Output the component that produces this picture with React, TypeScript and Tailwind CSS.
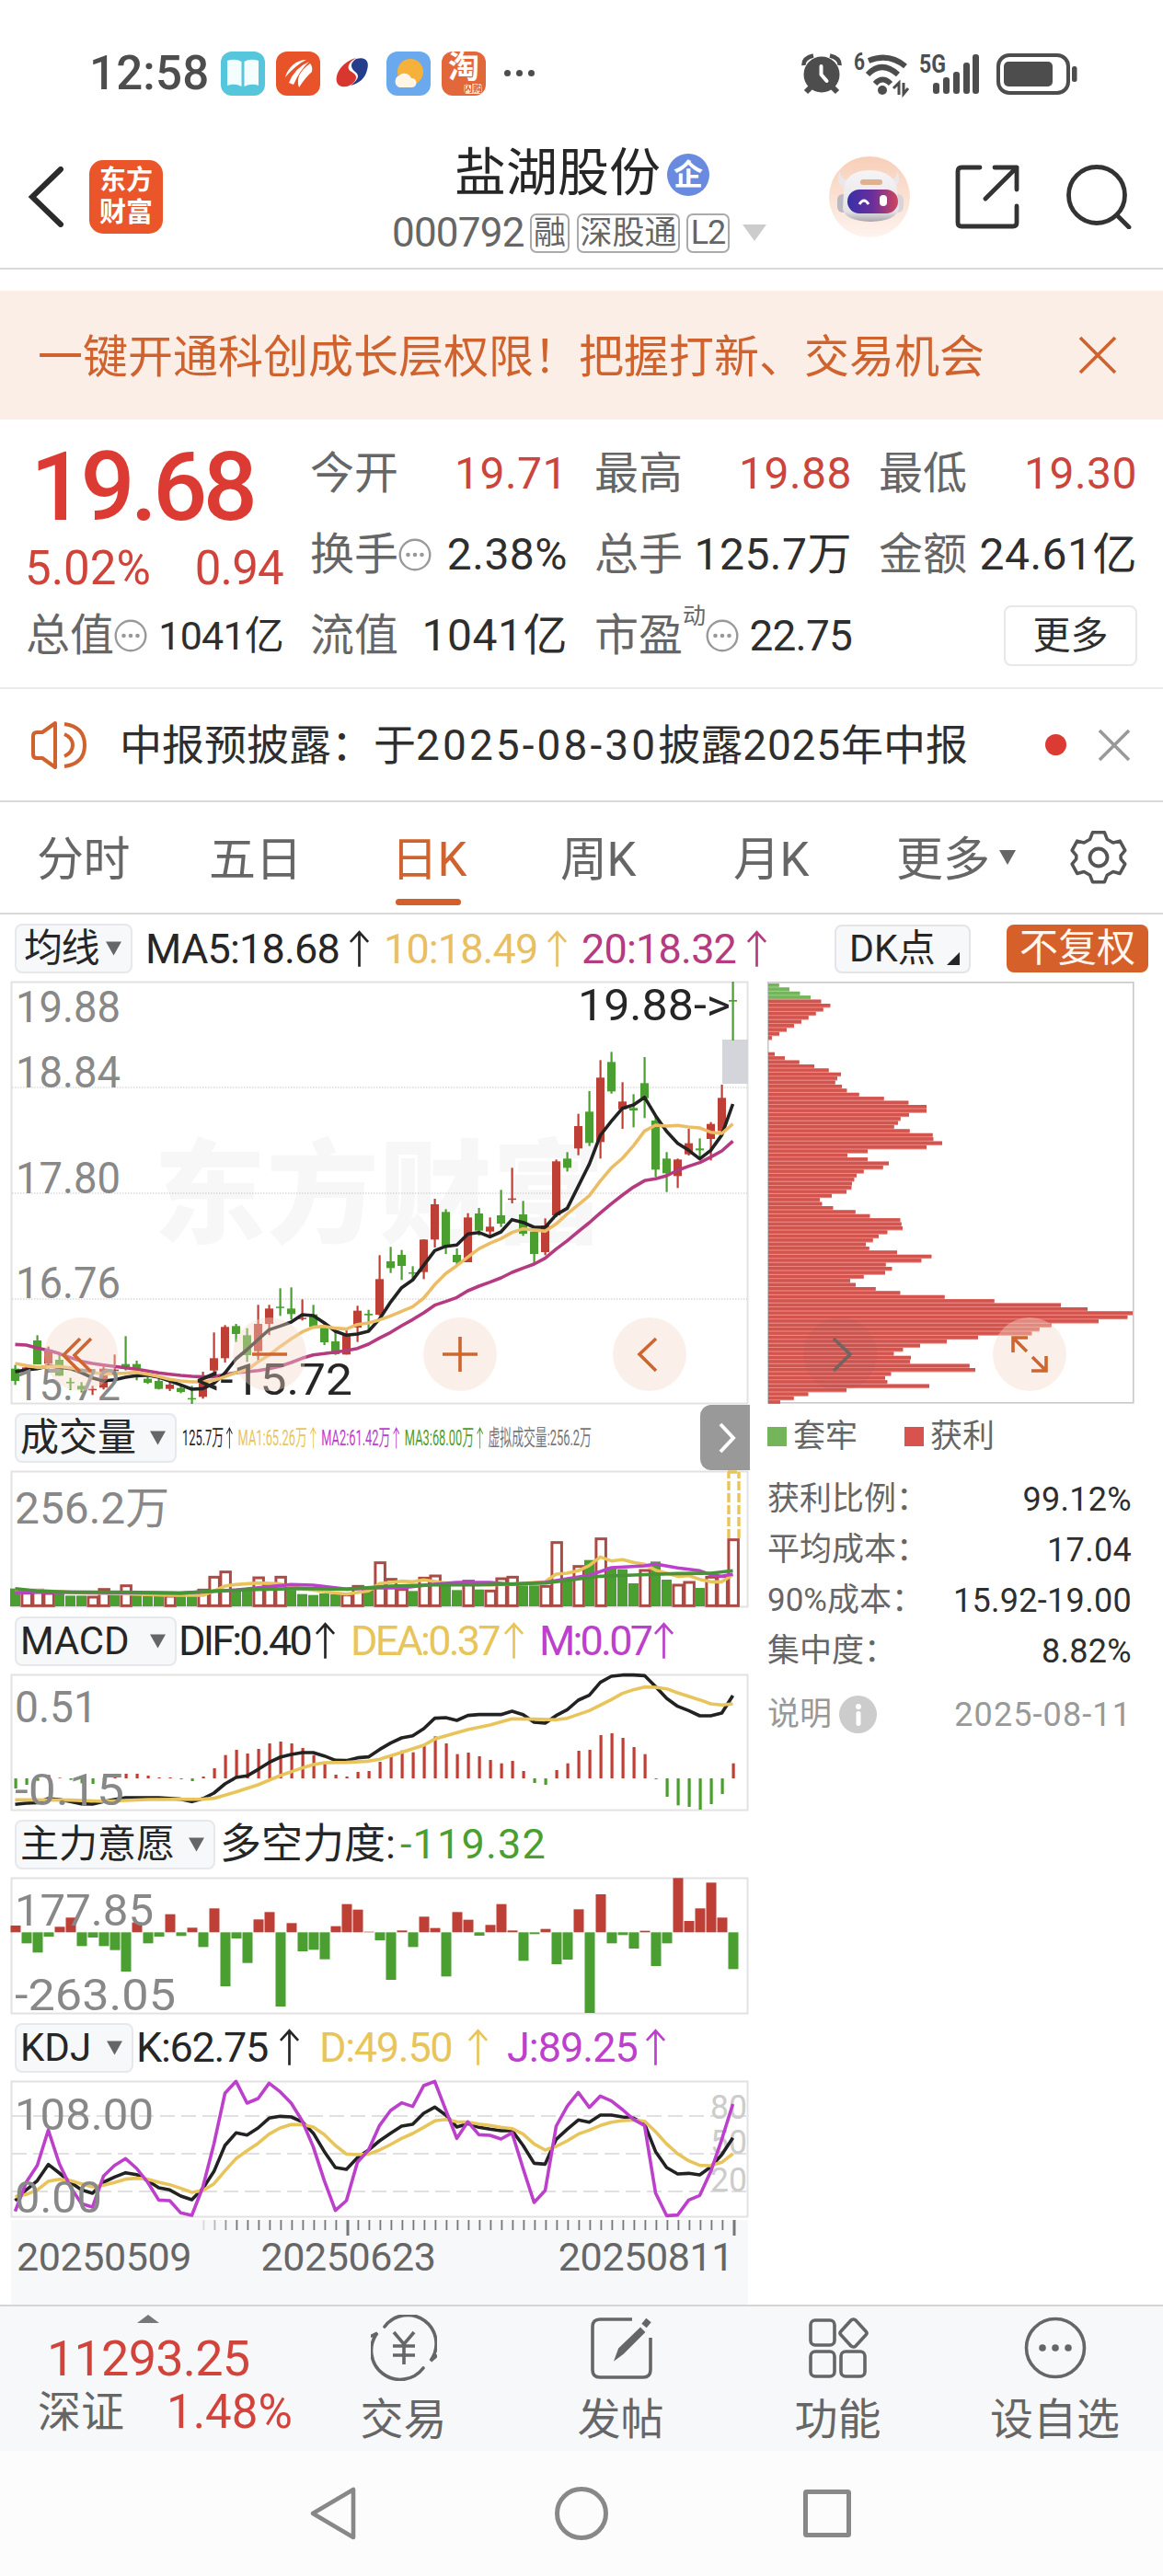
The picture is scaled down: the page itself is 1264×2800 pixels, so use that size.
import { ReactNode } from "react";
import { clsx } from "clsx";

type Point = [number, number];

const RED = "#bd3f36";
const GREEN = "#4b9e30";
const GOLD = "#e8c55a";
const PURPLE = "#bc40cb";

// [high, bodyTop, bodyBottom, low, up]
const candles: number[][] = [
  [1300, 1312, 1352, 1365, 0], [1300, 1308, 1326, 1326, 1], [1203, 1220, 1298, 1298, 0], [1240, 1255, 1296, 1312, 1],
  [1268, 1283, 1335, 1335, 0], [1342, 1355, 1359, 1382, 0], [1356, 1368, 1380, 1390, 0], [1368, 1378, 1382, 1398, 1],
  [1305, 1312, 1374, 1380, 1], [1266, 1315, 1320, 1330, 1], [1206, 1297, 1310, 1318, 0], [1286, 1297, 1312, 1350, 0],
  [1338, 1345, 1358, 1362, 0], [1345, 1352, 1378, 1380, 0], [1356, 1364, 1378, 1385, 1], [1368, 1375, 1388, 1392, 0],
  [1368, 1408, 1412, 1427, 0], [1322, 1352, 1404, 1410, 1], [1194, 1278, 1318, 1328, 1], [1170, 1176, 1278, 1292, 1],
  [1166, 1173, 1199, 1225, 0], [1180, 1203, 1268, 1290, 0], [1104, 1166, 1255, 1285, 1], [1104, 1116, 1166, 1202, 1],
  [1050, 1110, 1114, 1140, 0], [1047, 1116, 1134, 1152, 0], [1086, 1146, 1150, 1155, 1], [1104, 1135, 1176, 1180, 0],
  [1165, 1176, 1226, 1235, 0], [1180, 1223, 1265, 1267, 0], [1185, 1200, 1266, 1266, 1], [1107, 1123, 1178, 1225, 1],
  [1120, 1133, 1138, 1185, 0], [942, 1020, 1136, 1140, 1], [915, 962, 984, 1000, 0], [925, 941, 977, 1023, 0],
  [978, 998, 1002, 1020, 0], [890, 891, 997, 1020, 1], [758, 776, 891, 917, 1], [792, 801, 912, 938, 0],
  [920, 941, 965, 975, 0], [805, 819, 965, 965, 1], [788, 806, 862, 878, 0], [819, 849, 865, 880, 1],
  [729, 812, 839, 850, 0], [657, 757, 761, 773, 1], [765, 809, 872, 879, 0], [860, 865, 938, 968, 0],
  [822, 845, 932, 942, 1], [630, 636, 812, 818, 1], [606, 627, 657, 669, 0], [481, 521, 594, 616, 1],
  [407, 474, 576, 586, 0], [306, 363, 573, 627, 1], [279, 312, 408, 415, 0], [378, 441, 466, 530, 1],
  [417, 462, 470, 525, 0], [296, 381, 430, 495, 0], [490, 503, 663, 687, 0], [606, 627, 675, 736, 0],
  [627, 630, 684, 723, 1], [530, 577, 613, 617, 1], [561, 594, 600, 625, 0], [508, 514, 563, 633, 1],
  [386, 429, 537, 545, 1], [50, 110, 115, 242, 0],
];

const ma5 = [1322, 1316, 1312, 1303, 1308, 1312, 1325, 1342, 1352, 1348, 1340, 1335, 1333, 1340, 1352, 1365, 1379, 1377, 1360, 1326, 1280, 1250, 1217, 1185, 1173, 1160, 1136, 1139, 1163, 1190, 1203, 1199, 1190, 1150, 1095, 1048, 1023, 975, 927, 913, 909, 873, 868, 882, 866, 826, 835, 851, 851, 810, 789, 717, 645, 551, 505, 463, 452, 427, 487, 538, 577, 600, 628, 600, 550, 449];
const ma10 = [1295, 1302, 1308, 1306, 1305, 1309, 1315, 1325, 1329, 1328, 1327, 1324, 1330, 1338, 1347, 1352, 1355, 1355, 1350, 1338, 1325, 1316, 1290, 1268, 1240, 1215, 1192, 1177, 1174, 1180, 1183, 1168, 1163, 1153, 1140, 1125, 1110, 1082, 1038, 1002, 976, 948, 921, 903, 888, 868, 856, 860, 864, 840, 807, 778, 748, 700, 657, 626, 585, 537, 518, 521, 519, 524, 527, 541, 545, 514];
const ma20 = [1233, 1235, 1245, 1252, 1263, 1276, 1288, 1295, 1300, 1305, 1309, 1314, 1320, 1326, 1330, 1334, 1337, 1339, 1338, 1332, 1325, 1322, 1318, 1312, 1304, 1292, 1278, 1267, 1263, 1258, 1253, 1246, 1232, 1212, 1194, 1172, 1152, 1130, 1105, 1093, 1080, 1058, 1043, 1030, 1016, 998, 984, 971, 952, 922, 895, 865, 836, 804, 774, 746, 720, 699, 693, 683, 665, 652, 640, 622, 602, 570];

const volumes = [620, 632, 622, 633, 633, 643, 643, 645, 620, 638, 608, 638, 644, 644, 642, 645, 645, 622, 580, 563, 625, 625, 582, 605, 580, 625, 638, 641, 636, 638, 638, 610, 625, 533, 587, 620, 628, 583, 576, 612, 625, 593, 623, 625, 585, 580, 610, 610, 610, 467, 595, 545, 527, 455, 550, 557, 603, 558, 532, 591, 606, 597, 618, 580, 578, 458];
const volumeUp = new Set([1, 2, 3, 7, 8, 10, 14, 17, 18, 19, 22, 23, 24, 30, 31, 33, 34, 35, 37, 38, 41, 43, 44, 45, 48, 49, 51, 53, 57, 60, 61, 63, 64, 65]);
const volMa1: Point[] = [[0, 625], [3, 628], [6, 634], [10, 637], [14, 642], [17, 642], [18, 628], [19, 612], [20, 607], [22, 602], [24, 605], [26, 620], [28, 630], [30, 638], [32, 628], [33, 604], [35, 596], [36, 598], [37, 592], [39, 602], [41, 603], [43, 608], [45, 606], [47, 600], [48, 598], [49, 573], [50, 570], [51, 562], [52, 545], [53, 517], [54, 530], [55, 526], [56, 535], [57, 541], [58, 560], [59, 570], [60, 580], [61, 578], [62, 590], [63, 598], [64, 598], [65, 575]];
const volMa2: Point[] = [[0, 633], [5, 632], [15, 635], [20, 625], [22, 617], [25, 607], [27, 609], [30, 622], [33, 617], [35, 618], [38, 606], [40, 600], [43, 600], [45, 606], [48, 600], [50, 588], [52, 577], [54, 552], [57, 546], [58, 540], [60, 553], [62, 562], [63, 575], [64, 580], [65, 573]];
const volMa3: Point[] = [[0, 620], [2, 628], [5, 632], [10, 632], [15, 635], [18, 628], [22, 623], [26, 620], [30, 622], [34, 612], [38, 608], [42, 608], [46, 604], [48, 602], [50, 593], [53, 580], [56, 576], [60, 571], [63, 570], [65, 562]];

const macdBars = [432, 420, 407, 388, 397, 404, 415, 417, 402, 392, 384, 384, 390, 396, 396, 402, 408, 393, 366, 323, 306, 318, 303, 285, 279, 285, 300, 323, 352, 387, 393, 378, 375, 345, 322, 308, 314, 293, 262, 285, 320, 315, 327, 339, 350, 342, 375, 414, 420, 372, 350, 309, 306, 258, 252, 267, 297, 320, 402, 459, 487, 492, 501, 483, 450, 350];
const dif: Point[] = [[0, 484], [1, 480], [2, 478], [3, 465], [4, 468], [5, 475], [6, 482], [7, 483], [8, 475], [9, 468], [10, 462], [13, 462], [15, 467], [16, 475], [17, 465], [18, 447], [19, 417], [20, 396], [21, 391], [22, 370], [23, 347], [24, 330], [25, 321], [26, 315], [27, 315], [28, 326], [29, 340], [30, 341], [31, 332], [32, 329], [33, 305], [34, 284], [35, 267], [36, 260], [37, 237], [38, 203], [39, 201], [40, 210], [41, 194], [42, 191], [44, 191], [45, 180], [46, 191], [47, 216], [48, 219], [49, 194], [50, 175], [51, 144], [52, 128], [53, 86], [54, 66], [55, 62], [56, 62], [57, 64], [58, 100], [59, 138], [60, 164], [61, 178], [62, 195], [63, 195], [64, 186], [65, 129]];
const dea: Point[] = [[0, 469], [5, 470], [8, 474], [12, 468], [17, 467], [18, 464], [20, 443], [22, 420], [24, 390], [26, 365], [27, 354], [28, 348], [30, 347], [32, 343], [33, 337], [35, 314], [37, 291], [38, 271], [39, 260], [41, 240], [43, 225], [45, 205], [47, 206], [49, 208], [50, 203], [52, 178], [54, 142], [55, 122], [56, 110], [57, 101], [58, 102], [59, 107], [60, 120], [62, 143], [63, 156], [64, 160], [65, 156]];

const force = [878, 936, 966, 914, 882, 852, 945, 917, 945, 958, 1028, 868, 936, 914, 841, 912, 885, 948, 822, 1076, 920, 1000, 858, 834, 1142, 870, 962, 957, 988, 880, 808, 826, 898, 926, 1055, 894, 948, 849, 886, 1044, 834, 859, 911, 876, 808, 894, 993, 906, 889, 1004, 989, 825, 1163, 776, 936, 909, 953, 895, 1010, 936, 723, 863, 822, 738, 852, 1020];

const kdjJ = [640, 545, 490, 375, 485, 560, 615, 626, 525, 490, 468, 500, 545, 603, 605, 645, 653, 560, 420, 255, 216, 287, 272, 222, 250, 287, 345, 430, 540, 637, 605, 480, 440, 360, 311, 286, 298, 230, 216, 310, 402, 348, 390, 392, 404, 384, 500, 611, 572, 362, 297, 252, 301, 264, 280, 308, 340, 360, 580, 654, 652, 603, 588, 510, 405, 290];
const kdjK = [605, 570, 540, 487, 515, 545, 570, 581, 545, 528, 514, 520, 540, 563, 570, 590, 602, 565, 510, 425, 384, 391, 368, 336, 330, 332, 348, 385, 445, 497, 503, 465, 440, 410, 385, 362, 356, 320, 300, 326, 365, 354, 366, 372, 377, 376, 425, 483, 486, 405, 372, 342, 349, 326, 326, 332, 336, 355, 445, 497, 518, 516, 521, 495, 455, 400];
const kdjD = [592, 585, 570, 542, 535, 540, 550, 560, 555, 546, 535, 532, 535, 545, 553, 565, 578, 572, 550, 508, 468, 442, 418, 388, 368, 357, 357, 365, 390, 425, 453, 455, 453, 440, 422, 402, 386, 366, 345, 340, 348, 349, 355, 360, 366, 370, 388, 420, 440, 428, 410, 388, 375, 360, 349, 344, 342, 346, 380, 420, 452, 475, 490, 491, 480, 452];

// chip distribution, one entry per price level, 0 = empty
const chips = [35, 69, 103, 138, 172, 202, 179, 155, 131, 108, 84, 60, 36, 12, 0, 0, 0, 21, 54, 101, 150, 197, 237, 225, 218, 240, 256, 296, 377, 457, 516, 516, 459, 431, 423, 410, 461, 536, 538, 567, 516, 324, 258, 324, 393, 374, 311, 288, 280, 273, 271, 255, 207, 168, 175, 211, 284, 331, 430, 434, 438, 388, 360, 341, 318, 329, 420, 532, 499, 383, 403, 381, 311, 267, 285, 350, 430, 575, 737, 954, 1041, 1188, 1171, 1077, 923, 884, 859, 684, 582, 495, 439, 409, 465, 462, 656, 675, 400, 381, 388, 525, 255, 130, 83, 39];

const stepX = (i: number) => 4.5 + i * 12;
const scaleY = (y: number, top: number) => (y - top) / 3;

const Line = ({ data, top, color, width = 3.6 }: { data: number[] | Point[]; top: number; color: string; width?: number }) => {
  const points = data.map((d, i) => (typeof d === "number" ? [i, d] : d));
  return (
    <polyline
      fill="none"
      stroke={color}
      strokeWidth={width}
      strokeLinejoin="round"
      points={points.map(([i, y]) => `${stepX(i)},${scaleY(y, top)}`).join(" ")}
    />
  );
};

const Label = ({ x, y, w, size = 48, fill = "#888", children }: { x: number; y: number; w: number; size?: number; fill?: string; children: string }) => (
  <text x={x} y={y} textLength={w} lengthAdjust="spacingAndGlyphs" fontSize={size} fill={fill}>{children}</text>
);

const Chart = ({ height, children }: { height: number; children: ReactNode }) => (
  <svg width={801} height={height} viewBox={`0 0 801 ${height}`} className="block shrink-0 overflow-visible">
    <rect x="0.5" y="0.5" width="800" height={height - 1} fill="#fff" stroke="#e2e2e2" strokeWidth="2" />
    {children}
  </svg>
);

const ArrowUp = ({ className }: { className?: string }) => (
  <svg viewBox="0 0 24 42" className={clsx("inline-block h-[41px] w-[23px] shrink-0", className)} fill="none" stroke="currentColor" strokeWidth="2.8">
    <path d="M12 41V3M2 13L12 2l10 11" />
  </svg>
);

const Picker = ({ children, className }: { children: ReactNode; className?: string }) => (
  <button className={clsx("flex h-[54px] shrink-0 items-center justify-between rounded-lg border-2 border-[#e6e8eb] bg-[#f7f8fa] pr-2.5 pl-1 text-[42px] leading-none text-[#262626]", className)}>
    <span className="whitespace-nowrap">{children}</span>
    <svg viewBox="0 0 18 16" className="h-4 w-[17px] shrink-0" fill="#666"><path d="M0 0h18L9 16z" /></svg>
  </button>
);

const Dots = () => (
  <svg viewBox="0 0 36 36" className="h-9 w-9 shrink-0" fill="none" stroke="#999" strokeWidth="2.4">
    <circle cx="18" cy="18" r="16.3" />
    <g fill="#999" stroke="none"><circle cx="10.5" cy="18" r="2.3" /><circle cx="18" cy="18" r="2.3" /><circle cx="25.5" cy="18" r="2.3" /></g>
  </svg>
);

const StatusBar = () => (
  <div className="flex h-[130px] items-center pt-[29px] pr-[92px] pl-[97px] text-[#4d4d4d]">
    <span className="w-[143px] text-[51px] leading-none font-medium tracking-[0.2px]">12:58</span>
    <div className="flex items-center gap-3">
      <svg viewBox="0 0 48 48" className="size-12">
        <rect width="48" height="48" rx="12" fill="#55c6dc" />
        <path d="M7 10q9-3 15.500 1v27q-7-4-15.500-1zM25.500 11q6-4 15.500-1v27q-8-3-15.500 1z" fill="#f4fdff" />
      </svg>
      <svg viewBox="0 0 48 48" className="size-12">
        <rect width="48" height="48" rx="12" fill="#e9532a" />
        <path d="M10 28C13 17 22 9 33 9q-11 5-23 19zM14 34Q20 18 36 11q-10 9-17 25zM25 39q-5-14 12-26 3 3 2 9-7 6-14 17z" fill="#fff" />
      </svg>
      <svg viewBox="0 0 48 48" className="size-12">
        <path d="M27 7C13 11 4 23 6 33c2 7 13 7 19 0 4-5 2-8-3-11-6-3-4-10 5-15z" fill="#d8372f" />
        <path d="M27 8c10-3 15 2 12 12-2 9-9 15-18 17 9-7 10-11 5-15-6-5-5-10 1-14z" fill="#263d8c" />
      </svg>
      <svg viewBox="0 0 48 48" className="size-12">
        <rect width="48" height="48" rx="12" fill="#6aa9ee" />
        <circle cx="26" cy="22" r="14" fill="#f6b13b" />
        <path d="M14 39a7 7 0 0 1 0-13 8 8 0 0 1 13 3 5 5 0 0 1 1 10z" fill="#fff6e6" />
      </svg>
      <div className="flex size-12 flex-col items-center rounded-xl bg-[#e2683c] font-bold">
        <span className="text-[34px] leading-[35px] text-white">淘</span>
        <span className="ml-auto mr-1 rounded-sm bg-[#ffe9d0] text-[10px] leading-[11px] text-[#e0562c]">闪购</span>
      </div>
      <div className="ml-2 flex gap-[6px]">
        <i className="size-[7px] rounded-full bg-[#4d4d4d]" />
        <i className="size-[7px] rounded-full bg-[#4d4d4d]" />
        <i className="size-[7px] rounded-full bg-[#4d4d4d]" />
      </div>
    </div>
    <div className="ml-auto flex items-center">
      <svg viewBox="0 0 44 46" className="h-[46px] w-11" fill="none" stroke="#4d4d4d" strokeWidth="4.5">
        <circle cx="22" cy="24" r="19.500" fill="#4d4d4d" stroke="none" />
        <path d="M10 38l-5 5M34 38l5 5" strokeWidth="6" />
        <path d="M2.500 14Q2 6 13 3.500M41.500 14Q42 6 31 3.500" />
        <path d="M21.500 15v9l6 7" stroke="#fff" strokeWidth="4" strokeLinecap="round" />
      </svg>
      <svg viewBox="0 0 62 48" className="ml-[13px] h-12 w-[62px] overflow-visible" fill="none" stroke="#4d4d4d" strokeWidth="6">
        <text x="0" y="20" fontSize="25" fontWeight="700" fill="#4d4d4d" stroke="none" textLength="12" lengthAdjust="spacingAndGlyphs">6</text>
        <path d="M16 10q22-9 40 6M15 25q15-16 33 0M23 35q8-9 17 0" />
        <circle cx="31" cy="42" r="5" fill="#4d4d4d" stroke="none" />
        <path d="M49 47V34l-6 6M54 34v12l5-6" strokeWidth="3" />
      </svg>
      <svg viewBox="0 0 68 48" className="ml-[9px] h-12 w-[68px] overflow-visible" fill="#4d4d4d">
        <text x="0" y="23" fontSize="28" fontWeight="700" textLength="29" lengthAdjust="spacingAndGlyphs">5G</text>
        <rect x="15" y="34" width="7" height="12" rx="3" /><rect x="26" y="28" width="7" height="18" rx="3" /><rect x="37" y="22" width="7" height="24" rx="3" /><rect x="48" y="12" width="7" height="34" rx="3" /><rect x="58" y="3" width="7" height="43" rx="3" />
      </svg>
      <svg viewBox="0 0 90 46" className="ml-[15px] h-[46px] w-[90px]" fill="#4d4d4d">
        <rect x="3" y="3" width="76" height="41" rx="12" fill="none" stroke="#4d4d4d" strokeWidth="4" />
        <rect x="9" y="10" width="53" height="27" rx="5" />
        <rect x="83" y="15" width="5.500" height="17" rx="2.500" />
      </svg>
    </div>
  </div>
);

const Header = () => (
  <div className="flex h-[163px] items-center border-b-2 border-[#d9d9d9] pt-[6px] pr-[31px] pl-[29px]">
    <svg viewBox="0 0 42 66" className="h-[66px] w-[42px]" fill="none" stroke="#2b2b2b" strokeWidth="6"><path d="M37 3L6 33l31 30" strokeLinecap="round" /></svg>
    <div className="ml-[26px] flex size-20 flex-col items-center justify-center rounded-[15px] bg-[#ea5529] text-[29px] leading-[35px] font-bold text-white">
      <span>东方</span>
      <span>财富</span>
    </div>
    <div className="-mt-[6px] ml-[249px] flex h-full w-[410px] flex-col pt-[20px]">
      <div className="flex h-[70px] items-center pl-[68px]">
        <h1 className="text-[56px] leading-none text-[#262626]">盐湖股份</h1>
        <span className="mt-1 ml-[7px] flex size-[46px] items-center justify-center rounded-full bg-[#6a8ae0] text-[32px] leading-none font-bold text-white">企</span>
      </div>
      <div className="mt-[8px] flex h-[44px] items-center text-[#666]">
        <span className="w-[150px] text-[44px] leading-none tracking-[-0.8px]">000792</span>
        <span className="flex h-[43px] w-[43px] items-center justify-center rounded-[7px] border-2 border-[#aaa] text-[35px] leading-none">融</span>
        <span className="ml-2 flex h-[43px] w-[112px] items-center justify-center rounded-[7px] border-2 border-[#aaa] text-[35px] leading-none">深股通</span>
        <span className="ml-[7px] flex h-[43px] w-[47px] items-center justify-center rounded-[7px] border-2 border-[#aaa] text-[36px] leading-none tracking-[-1px]">L2</span>
        <svg viewBox="0 0 26 18" className="ml-[14px] h-[18px] w-[26px]" fill="#ccc"><path d="M0 0h26L13 18z" /></svg>
      </div>
    </div>
    <svg viewBox="0 0 88 88" className="ml-[65px] h-[88px] w-[88px] shrink-0">
      <defs>
        <linearGradient id="halo" x1="0" y1="0" x2="0" y2="1"><stop offset="0" stopColor="#f7cfb8" /><stop offset="1" stopColor="#fef3ee" /></linearGradient>
        <linearGradient id="shell" x1="0" y1="0" x2="0" y2="1"><stop offset="0" stopColor="#f6f4f5" /><stop offset="0.8" stopColor="#e6e3e7" /><stop offset="1" stopColor="#a9a5ad" /></linearGradient>
        <linearGradient id="visor"><stop offset="0" stopColor="#3730a8" /><stop offset="0.5" stopColor="#6a2f9c" /><stop offset="1" stopColor="#d0455c" /></linearGradient>
      </defs>
      <circle cx="44" cy="44" r="44" fill="url(#halo)" />
      <path d="M12 16q0 8 8 10l-4 8q-7-4-6-10 0-5 2-8zM74 16q0 8-8 10l4 8q7-4 6-10 0-5-2-8z" fill="#ece6e8" />
      <rect x="9" y="41" width="14" height="20" rx="6" fill="#bdb9c0" /><rect x="67" y="41" width="14" height="20" rx="6" fill="#d8d4da" />
      <path d="M16 38q0-22 28-23 29 1 30 23l2 18q-2 14-31 15-28-1-30-14z" fill="url(#shell)" />
      <rect x="34" y="25" width="24" height="6" rx="3" fill="#deb18f" />
      <rect x="20" y="36" width="55" height="26" rx="13" fill="url(#visor)" />
      <path d="M33 52q5-8 10 0" fill="none" stroke="#fff" strokeWidth="3" />
      <rect x="55" y="42" width="8" height="12" rx="4" fill="#fff" />
    </svg>
    <svg viewBox="0 0 70 70" className="ml-[49px] h-[70px] w-[70px] shrink-0" fill="none" stroke="#333" strokeWidth="4.8" strokeLinejoin="round" strokeLinecap="round">
      <path d="M27 3H7q-4 0-4 4v56q0 4 4 4h56q4 0 4-4V45" /><path d="M43 3h24v24M67 3L33 37" />
    </svg>
    <svg viewBox="0 0 72 70" className="ml-[50px] h-[70px] w-[72px] shrink-0" fill="none" stroke="#333" strokeWidth="4.8"><circle cx="34" cy="33" r="30.500" /><path d="M56 55l13 13" strokeLinecap="round" /></svg>
  </div>
);

const Banner = () => (
  <div className="mt-[23px] flex h-[140px] items-center justify-between bg-[#fbeee6] pr-[50px] pl-[41px] text-[#d0622d]">
    <span className="mt-1 text-[49px] leading-none whitespace-nowrap">一键开通科创成长层权限！把握打新、交易机会</span>
    <svg viewBox="0 0 42 42" className="size-[42px]" fill="none" stroke="currentColor" strokeWidth="3.6"><path d="M2 2l38 38M40 2L2 40" /></svg>
  </div>
);

const Cell = ({ label, value, up, info, sup, size }: { label: string; value: string; up?: boolean; info?: boolean; sup?: string; size?: string }) => (
  <div className="flex h-[88px] items-center text-[48px] leading-none whitespace-nowrap">
    <span className="-ml-[2px] text-[#666]">{label}</span>
    {sup && <span className="-mt-[44px] text-[25px] text-[#666]">{sup}</span>}
    {info && <Dots />}
    <span className={clsx("ml-auto", up ? "text-[#cb453d]" : "text-[#2e2e2e]", size ?? "tracking-[0.5px]")}>{value}</span>
  </div>
);

const Quote = () => (
  <div className="grid h-[293px] grid-cols-[278px_278px_278px_279px] content-start gap-x-[31px] border-b-2 border-[#ebebeb] px-[30px] pt-[15px]">
    <div className="row-span-2 h-[176px] leading-none">
      <div className="pt-[7px] pl-[3px] text-[104px] font-medium tracking-[-4.6px] text-[#dc3b33]">19.68</div>
      <div className="-ml-[3px] mt-[10px] flex justify-between text-[51px] text-[#cf433b]"><span>5.02%</span><span className="tracking-[-0.8px]">0.94</span></div>
    </div>
    <Cell label="今开" value="19.71" up />
    <Cell label="最高" value="19.88" up />
    <Cell label="最低" value="19.30" up />
    <Cell label="换手" value="2.38%" info />
    <Cell label="总手" value="125.7万" />
    <Cell label="金额" value="24.61亿" />
    <Cell label="总值" value="1041亿" info size="text-[43px] tracking-[-0.8px]" />
    <Cell label="流值" value="1041亿" />
    <Cell label="市盈" sup="动" value="22.75" info size="text-[46px] tracking-[-0.8px]" />
    <div className="flex h-[88px] items-center justify-end">
      <button className="h-[66px] w-[145px] rounded-lg border-2 border-[#e8e8e8] text-[41px] leading-none text-[#2e2e2e]">更多</button>
    </div>
  </div>
);

const Notice = () => (
  <div className="flex h-[123px] items-center border-b-2 border-[#d9d9d9] pr-[35px] pl-[34px]">
    <svg viewBox="0 0 62 52" className="h-[52px] w-[62px]" fill="none" stroke="#d0622d" strokeWidth="4" strokeLinejoin="round">
      <path d="M12 12h-6q-4 0-4 4v20q0 4 4 4h6l14 10V2L12 12z" /><path d="M36 14q9 4 9 12t-9 12M36 3q22 3 22 23T36 49" />
    </svg>
    <span className="ml-[34px] text-[46px] leading-none whitespace-nowrap text-[#2e2e2e]">
      中报预披露：于<span className="tracking-[3.1px]">2025-08-30</span>披露<span className="tracking-[0.8px]">2025</span>年中报
    </span>
    <i className="ml-auto size-[23px] rounded-full bg-[#dc3b33]" />
    <svg viewBox="0 0 36 36" className="ml-[34px] size-9" fill="none" stroke="#999" strokeWidth="3.6"><path d="M2 2l32 32M34 2L2 34" /></svg>
  </div>
);

const tabs = [
  { label: "分时", width: "w-[187px]" },
  { label: "五日", width: "w-[198px]" },
  { label: "日K", width: "w-[184px]" },
  { label: "周K", width: "w-[188px]" },
  { label: "月K", width: "w-[177px]" },
];

const Tabs = () => (
  <div className="flex h-[122px] items-center border-b-2 border-[#d9d9d9] pl-[40px] text-[51px] leading-none text-[#666]">
    {tabs.map((t) => (
      <div key={t.label} className={clsx("flex h-full shrink-0 flex-col pt-[37px] tracking-[-0.5px]", t.width, t.label === "日K" && "text-[#d0622d]")}>
        <span>{t.label}</span>
        {t.label === "日K" && <i className="mt-[17px] ml-[5px] h-[7px] w-[71px] rounded-full bg-[#d35f2a]" />}
      </div>
    ))}
    <span className="mt-1">更多</span>
    <svg viewBox="0 0 18 16" className="ml-[10px] h-4 w-[18px]" fill="#666"><path d="M0 0h18L9 16z" /></svg>
    <svg viewBox="0 0 64 64" className="ml-[58px] size-16" fill="none" stroke="#555" strokeWidth="3.8" strokeLinejoin="round">
      <path d="M25 3h14l3 8 7 4 8-2 6 11-5 6v4l5 6-6 11-8-2-7 4-3 8H25l-3-8-7-4-8 2-6-11 5-6v-4l-5-6 6-11 8 2 7-4z" transform="translate(2.200 2) scale(.93)" />
      <circle cx="32" cy="32" r="9.500" />
    </svg>
  </div>
);

const Indicators = () => (
  <div className="flex h-[73px] items-center pt-px text-[45px] leading-none whitespace-nowrap">
    <Picker className="ml-4 w-[128px] !pl-2 tracking-[-1.5px]">均线</Picker>
    <span className="ml-[14px] flex w-[259px] items-center justify-between pr-[15px] tracking-[-0.8px] text-[#262626]">MA5:18.68<ArrowUp /></span>
    <span className="flex w-[215px] items-center justify-between pr-[15px] tracking-[-0.9px] text-[#e9bf64]">10:18.49<ArrowUp /></span>
    <span className="flex w-[202px] items-center justify-between tracking-[-0.8px] text-[#b53a80]">20:18.32<ArrowUp /></span>
    <button className="ml-[73px] flex h-[53px] w-[148px] items-center rounded-lg border-2 border-[#e3e5e9] bg-[#f7f8fa] pl-[14px] text-[41px] text-[#262626]">
      DK点
      <svg viewBox="0 0 14 14" className="mt-[22px] ml-[12px] size-3.5 shrink-0"><path d="M14 0v14H0z" fill="#262626" /></svg>
    </button>
    <button className="ml-[39px] h-[52px] w-[154px] rounded-lg bg-[#d6602a] text-[42px] leading-none text-[#fff6ef]">不复权</button>
  </div>
);

const FloatButton = ({ className, children }: { className: string; children: ReactNode }) => (
  <div className={clsx("absolute top-[365px] size-20 rounded-full bg-[#f6d9c8]/40", className)}>
    <svg viewBox="0 0 80 80" className="size-20" fill="none" stroke="#cf652f" strokeWidth="3.6">{children}</svg>
  </div>
);

const CandleChart = () => (
  <Chart height={459}>
    <text x="155" y="274" fontSize="122" fontWeight="900" fill="#f7f7f7" textLength="490">东方财富</text>
    {[115, 230, 345].map((y) => <line key={y} x1="1" x2="800" y1={y} y2={y} stroke="#c8c8c8" strokeDasharray="1.5 1.5" />)}
    <rect x="773" y="63" width="28" height="48" fill="#d4d5da" />
    {candles.map(([high, top, bottom, low, up], i) => (
      <g key={i} fill={up ? RED : GREEN}>
        <rect x={stepX(i) - 1} width="2.2" y={scaleY(high, 50)} height={(low - high) / 3} />
        <rect x={stepX(i) - 4.5} width="9" y={scaleY(top, 50)} height={Math.max((bottom - top) / 3, 1.5)} />
      </g>
    ))}
    <Line data={ma20} top={50} color="#b53a80" />
    <Line data={ma5} top={50} color="#222" />
    <Line data={ma10} top={50} color="#ecbd67" />
    <Label x={5} y={44} w={114}>19.88</Label>
    <Label x={5} y={115} w={114}>18.84</Label>
    <Label x={5} y={230} w={114}>17.80</Label>
    <Label x={5} y={344} w={114}>16.76</Label>
    <Label x={5} y={455} w={114}>15.72</Label>
    <Label x={616} y={42} w={166} fill="#262626">{"19.88->"}</Label>
    <Label x={201} y={449} w={170} fill="#262626">{"<-15.72"}</Label>
  </Chart>
);

const ChipChart = () => (
  <svg width="399" height="459" className="block">
    <rect x="0.8" y="0.8" width="397" height="457" fill="none" stroke="#c8c8c8" strokeWidth="1.6" />
    {chips.map((w, i) => (
      <g key={i}>
        <rect x="1" y={2 + i * 4.4} width={w / 3} height="4.4" fill={i < 4 ? "#9ccb87" : "#ee857e"} />
        <rect x="1" y={2 + i * 4.4} width={w / 3} height="3.4" fill={i < 4 ? "#74b45a" : "#d2544e"} />
      </g>
    ))}
  </svg>
);

const VolumeChart = () => (
  <Chart height={148}>
    {volumes.map((v, i) =>
      volumeUp.has(i)
        ? <rect key={i} x={stepX(i) - 4.6} y={scaleY(v, 237) + 1} width="10.5" height={scaleY(676, v) - 1} fill="#fff" stroke="#ac4a44" strokeWidth="3" />
        : <rect key={i} x={stepX(i) - 5.5} y={scaleY(v, 237)} width="11" height={scaleY(678, v)} fill={GREEN} />
    )}
    <path d="M780 73V1M791 73V1M779 1h13" fill="none" stroke={GOLD} strokeWidth="3.4" strokeDasharray="10 3" />
    <Line data={volMa1} top={237} color={GOLD} />
    <Line data={volMa2} top={237} color={PURPLE} />
    <Line data={volMa3} top={237} color="#479436" />
    <Label x={4} y={57} w={168}>256.2万</Label>
  </Chart>
);

const MacdChart = () => (
  <Chart height={148}>
    {macdBars.map((v, i) => (
      <rect key={i} x={stepX(i) - 1} width="3.2" y={scaleY(Math.min(v, 399), 60)} height={Math.abs(v - 399) / 3} fill={v < 399 ? RED : GREEN} />
    ))}
    <Line data={dif} top={60} color="#222" />
    <Line data={dea} top={60} color={GOLD} />
    <Label x={4} y={52} w={90}>0.51</Label>
    <Label x={4} y={142} w={119}>-0.15</Label>
  </Chart>
);

const ForceChart = () => (
  <Chart height={148}>
    {force.map((v, i) => (
      <rect key={i} x={stepX(i) - 5} width="11" y={scaleY(Math.min(v, 900), 722)} height={Math.abs(v - 900) / 3} fill={v < 900 ? RED : GREEN} />
    ))}
    <Label x={4} y={52} w={151}>177.85</Label>
    <Label x={4} y={144} w={175}>-263.05</Label>
  </Chart>
);

const KdjChart = () => (
  <Chart height={148}>
    {[38, 79, 120].map((y) => <line key={y} x1="1" x2="800" y1={y} y2={y} stroke="#e0e0e0" strokeWidth="2" strokeDasharray="16 7" />)}
    <Label x={760} y={41} w={40} size={36} fill="#ccc">80</Label>
    <Label x={760} y={79} w={40} size={36} fill="#ccc">50</Label>
    <Label x={760} y={120} w={40} size={36} fill="#ccc">20</Label>
    <Line data={kdjK} top={215} color="#222" />
    <Line data={kdjD} top={215} color={GOLD} />
    <Line data={kdjJ} top={215} color={PURPLE} />
    <Label x={4} y={53} w={151}>108.00</Label>
    <Label x={4} y={143} w={95}>0.00</Label>
  </Chart>
);

const DateAxis = () => (
  <div className="mt-[3px] h-[92px] w-[801px] bg-[#f7f8fa]">
    <svg width="801" height="18" className="block">
      {Array.from({ length: 49 }, (_, n) => n + 17).map((i) => {
        const major = i === 30 || i === 65;
        return <rect key={i} x={stepX(i)} y="0" width={major ? 3 : 1.8} height={major ? 17 : 11} fill="#777" opacity={i < 20 ? (i - 16) * 0.25 : 1} />;
      })}
    </svg>
    <div className="flex justify-between pt-px pr-[16px] pl-[6px] text-[43px] leading-none tracking-[-0.4px] text-[#666]">
      <span>20250509</span><span className="mr-[58px]">20250623</span><span>20250811</span>
    </div>
  </div>
);

const Row = ({ children }: { children: ReactNode }) => (
  <div className="flex h-[73px] w-[801px] items-center pl-1 text-[45px] leading-none whitespace-nowrap">{children}</div>
);

const Value = ({ className, children }: { className: string; children: ReactNode }) => (
  <span className={clsx("flex shrink-0 items-center justify-between", className)}>{children}<ArrowUp /></span>
);

const Charts = () => (
  <div className="relative ml-3 w-[801px]">
    <CandleChart />
    <FloatButton className="left-[36px]"><path d="M39 23L21 41l18 18M51 23L33 41l18 18" /></FloatButton>
    <FloatButton className="left-[241px]"><path d="M21 40h38" /></FloatButton>
    <FloatButton className="left-[448px]"><path d="M21 40h38M40 21v38" /></FloatButton>
    <FloatButton className="left-[654px]"><path d="M47 23L29 40l18 18" /></FloatButton>
    <Row>
      <Picker className="w-[176px]">成交量</Picker>
      <div className="ml-[6px] w-[563px]">
        <div className="flex w-max origin-left scale-x-[0.535] items-center gap-[9px] text-[24px]">
          <span className="flex items-center gap-1 text-[#262626]">125.7万<ArrowUp className="!h-6 !w-4" /></span>
          <span className="flex items-center gap-1 text-[#e8c55a]">MA1:65.26万<ArrowUp className="!h-6 !w-4" /></span>
          <span className="flex items-center gap-1 text-[#bc40cb]">MA2:61.42万<ArrowUp className="!h-6 !w-4" /></span>
          <span className="flex items-center gap-1 text-[#4b9e30]">MA3:68.00万<ArrowUp className="!h-6 !w-4" /></span>
          <span className="text-[#777]">虚拟成交量:256.2万</span>
        </div>
      </div>
      <button className="flex h-[71px] w-[54px] shrink-0 items-center justify-center rounded-l-xl bg-[#999]">
        <svg viewBox="0 0 20 34" className="ml-1 h-[34px] w-5" fill="none" stroke="#fff" strokeWidth="4"><path d="M3 2l14 15L3 32" /></svg>
      </button>
    </Row>
    <VolumeChart />
    <Row>
      <Picker className="w-[176px] tracking-[-0.2px]">MACD</Picker>
      <Value className="ml-[2px] w-[171px] tracking-[-2.8px] text-[#262626]">DIF:0.40</Value>
      <Value className="ml-[16px] w-[189px] tracking-[-2.8px] text-[#e8c55a]">DEA:0.37</Value>
      <Value className="ml-[16px] w-[147px] tracking-[-2.8px] text-[#bc40cb]">M:0.07</Value>
    </Row>
    <MacdChart />
    <Row>
      <Picker className="w-[218px]">主力意愿</Picker>
      <span className="ml-[5px] text-[#262626]">多空力度:</span>
      <span className="ml-[5px] tracking-[1.2px] text-[#4b9e30]">-119.32</span>
    </Row>
    <ForceChart />
    <Row>
      <Picker className="w-[129px]">KDJ</Picker>
      <Value className="ml-[3px] w-[178px] tracking-[-1.3px] text-[#262626]">K:62.75</Value>
      <Value className="ml-[21px] w-[184px] tracking-[-1.3px] text-[#e8c55a]">D:49.50</Value>
      <Value className="ml-[20px] w-[173px] tracking-[-1px] text-[#bc40cb]">J:89.25</Value>
    </Row>
    <KdjChart />
    <DateAxis />
  </div>
);

const costs = [
  ["获利比例：", "99.12%"],
  ["平均成本：", "17.04"],
  ["90%成本：", "15.92-19.00"],
  ["集中度：", "8.82%"],
];

const ChipPanel = () => (
  <div className="relative ml-[21px] w-[399px] text-[35px] leading-none text-[#666]">
    <ChipChart />
    <div className="absolute top-[365px] left-[39px] size-20 rounded-full bg-[#8a5a5a]/10">
      <svg viewBox="0 0 80 80" className="size-20" fill="none" stroke="#6f6664" strokeWidth="3.6"><path d="M33 23l18 17-18 18" /></svg>
    </div>
    <FloatButton className="left-[245px]"><path d="M37 37L22 22M22 38V22h16M43 43l15 15M58 42v16H42" /></FloatButton>
    <div className="flex h-[70px] items-center">
      <i className="size-[21px] bg-[#74b45a]" /><span className="ml-[7px]">套牢</span>
      <i className="ml-[51px] size-[21px] bg-[#d9534e]" /><span className="ml-[7px]">获利</span>
    </div>
    <div className="mt-[6px] pr-[3px]">
      {costs.map(([label, value]) => (
        <div key={label} className="flex h-[55px] items-center justify-between whitespace-nowrap">
          <span>{label}</span>
          <span className="text-[36px] tracking-[0.3px] text-[#2e2e2e]">{value}</span>
        </div>
      ))}
      <div className="mt-[14px] flex h-[55px] items-center text-[#999]">
        <span>说明</span>
        <span className="ml-[8px] flex size-[41px] items-center justify-center rounded-full bg-[#ccc]">
          <svg viewBox="0 0 6 24" className="h-6 w-1.5" fill="#fff"><circle cx="3" cy="3" r="3" /><rect x="0.500" y="8" width="5" height="16" rx="2.500" /></svg>
        </span>
        <span className="ml-auto text-[36px] tracking-[1.1px]">2025-08-11</span>
      </div>
    </div>
  </div>
);

const navItems: { label: string; icon: ReactNode; left: string }[] = [
  {
    label: "交易",
    left: "w-[237px]",
    icon: (
      <>
        <path d="M15 13A31 31 0 0 1 65 50l6-5M57 58A31 31 0 0 1 7 20L1 23" strokeLinecap="round" />
        <path d="M25 19l11 13 11-13M36 32v22M24 34h24M24 44h24" />
      </>
    ),
  },
  {
    label: "发帖",
    left: "w-[235px]",
    icon: (
      <>
        <path d="M48 5H13q-8 0-8 8v47q0 8 8 8h47q8 0 8-8V25" />
        <path d="M30 48l4-11L57 15l4 4-23 23z" fill="#666" strokeWidth="2" /><path d="M61 12l5-6" strokeWidth="7" />
      </>
    ),
  },
  {
    label: "功能",
    left: "w-[237px]",
    icon: (
      <>
        <rect x="6" y="6" width="26" height="27" rx="5" /><rect x="6" y="40" width="26" height="27" rx="5" /><rect x="39" y="40" width="26" height="27" rx="5" />
        <path d="M50 6q3-2 5 0l11 12q2 2 0 4L55 34q-2 2-5 0L39 22q-2-2 0-4z" />
      </>
    ),
  },
  {
    label: "设自选",
    left: "w-[235px]",
    icon: (
      <>
        <circle cx="36" cy="36" r="31.500" />
        <g fill="#666" stroke="none"><circle cx="22" cy="36" r="3.800" /><circle cx="36" cy="36" r="3.800" /><circle cx="50" cy="36" r="3.800" /></g>
      </>
    ),
  },
];

const BottomNav = () => (
  <div className="flex h-[159px] border-t-2 border-[#d5d5d5] bg-[#f7f8fa] leading-none">
    <div className="flex w-[320px] flex-col pt-[9px]">
      <svg viewBox="0 0 24 9" className="ml-[149px] h-[9px] w-6" fill="#777"><path d="M12 0l12 9H0z" /></svg>
      <span className="mt-[12px] ml-[51px] text-[54px] tracking-[-0.8px] text-[#d2433b]">11293.25</span>
      <div className="mt-[5px] ml-[41px] flex items-center text-[47px] text-[#666]">
        深证<span className="ml-[46px] text-[51px] text-[#d2433b]">1.48%</span>
      </div>
    </div>
    {navItems.map((item) => (
      <div key={item.label} className={clsx("flex shrink-0 flex-col items-center pt-[9px] text-[#666]", item.left)}>
        <svg viewBox="0 0 72 72" className="size-[72px]" fill="none" stroke="#666" strokeWidth="3.6">{item.icon}</svg>
        <span className="mt-[18px] text-[47px]">{item.label}</span>
      </div>
    ))}
  </div>
);

const SystemNav = () => (
  <div className="flex h-[136px] items-center bg-[#fcfcfc] pl-[336px]">
    <svg viewBox="0 0 52 60" className="h-[60px] w-[52px]" fill="none" stroke="#888" strokeWidth="4.600" strokeLinejoin="round"><path d="M48 4v52L4 30z" /></svg>
    <svg viewBox="0 0 60 60" className="ml-[214px] size-[60px]" fill="none" stroke="#888" strokeWidth="5"><circle cx="30" cy="30" r="26.500" /></svg>
    <svg viewBox="0 0 54 54" className="ml-[210px] size-[54px]" fill="none" stroke="#888" strokeWidth="5"><rect x="3.500" y="3.500" width="47" height="47" rx="1" /></svg>
  </div>
);

export default function App() {
  return (
    <div className="h-[2800px] w-[1264px] overflow-hidden bg-white font-['Roboto','Noto_Sans_CJK_SC',sans-serif]">
      <StatusBar />
      <Header />
      <Banner />
      <Quote />
      <Notice />
      <Tabs />
      <Indicators />
      <div className="flex h-[1438px] items-start">
        <Charts />
        <ChipPanel />
      </div>
      <BottomNav />
      <SystemNav />
    </div>
  );
}
